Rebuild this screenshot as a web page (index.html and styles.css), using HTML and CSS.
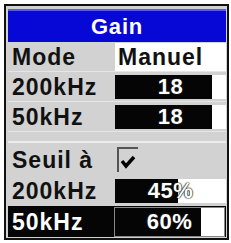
FILE: index.html
```html
<!DOCTYPE html>
<html lang="fr">
<head>
    <meta charset="UTF-8">
    <meta name="viewport" content="width=device-width, initial-scale=1.0">
    <title>Gain</title>
    <link rel="stylesheet" href="styles.css">
</head>
<body>
    <div class="panel">
        <div class="title">Gain</div>
        <div class="group">
            <div class="row">
                <span class="label">Mode</span>
                <span class="cell text">Manuel</span>
            </div>
            <div class="row">
                <span class="label">200kHz</span>
                <span class="cell"><span class="fill" style="width: 87%"></span><span class="val">18</span></span>
            </div>
            <div class="row">
                <span class="label">50kHz</span>
                <span class="cell"><span class="fill" style="width: 87%"></span><span class="val">18</span></span>
            </div>
        </div>
        <div class="group second">
            <div class="row tall">
                <span class="label">Seuil à</span>
                <span class="check">
                    <svg width="21" height="25" viewBox="0 0 21 25">
                        <path d="M1 25 V1 H21" fill="none" stroke="#555" stroke-width="2"/>
                        <path d="M5 14 L9 19 L17 10" fill="none" stroke="#000" stroke-width="3.5"/>
                    </svg>
                </span>
            </div>
            <div class="row tall">
                <span class="label">200kHz</span>
                <span class="cell"><span class="fill" style="width: 57%"></span><span class="val">45%</span></span>
            </div>
            <div class="row tall selected">
                <span class="label">50kHz</span>
                <span class="cell"><span class="fill" style="width: 79%"></span><span class="val">60%</span></span>
            </div>
        </div>
    </div>
</body>
</html>
```

FILE: styles.css
```css
* {
    margin: 0;
    padding: 0;
    box-sizing: border-box;
}

body {
    background: white;
    font-family: "Liberation Sans", Arial, sans-serif;
    font-weight: bold;
}

.panel {
    margin: 4px 2px 0 4px;
    height: 236px;
    border: 2px solid #111;
    background: #d2d2d2;
    padding: 3px 1px 0 2px;
}

.title {
    height: 33px;
    background: #0808d6;
    border-top: 2px solid #5a5af0;
    color: white;
    font-size: 22px;
    line-height: 31px;
    text-align: center;
    letter-spacing: 0.8px;
}

.row {
    display: grid;
    grid-template-columns: 107px 1fr;
    align-items: center;
    height: 30px;
    border-bottom: 1px solid #e6e6e6;
}

.row.tall {
    height: 31px;
    border-bottom: none;
}

.second {
    margin-top: 9px;
    border-top: 2px solid #ececec;
    padding-top: 1px;
}

.label {
    padding-left: 4px;
    padding-top: 2px;
    font-size: 23px;
    letter-spacing: 1px;
    color: #111;
}

.cell {
    position: relative;
    height: 24px;
    background: white;
    display: flex;
    align-items: center;
    justify-content: center;
}

.cell.text {
    height: 28px;
    justify-content: flex-start;
    padding-left: 3px;
    padding-top: 2px;
    font-size: 23px;
    letter-spacing: 1px;
    color: #111;
}

.fill {
    position: absolute;
    left: 0;
    top: 0;
    bottom: 0;
    background: #050505;
}

.val {
    position: relative;
    color: white;
    font-size: 22px;
    letter-spacing: 0.5px;
    text-shadow: 0 0 1px #000, 0 0 1px #000, 0 0 2px #444;
}

.check {
    display: flex;
    padding-left: 2px;
}

.selected {
    background: #050505;
}

.selected .label {
    color: white;
}

.selected .cell {
    height: 28px;
    margin-right: 2px;
    outline: 1px solid #888;
}
```
